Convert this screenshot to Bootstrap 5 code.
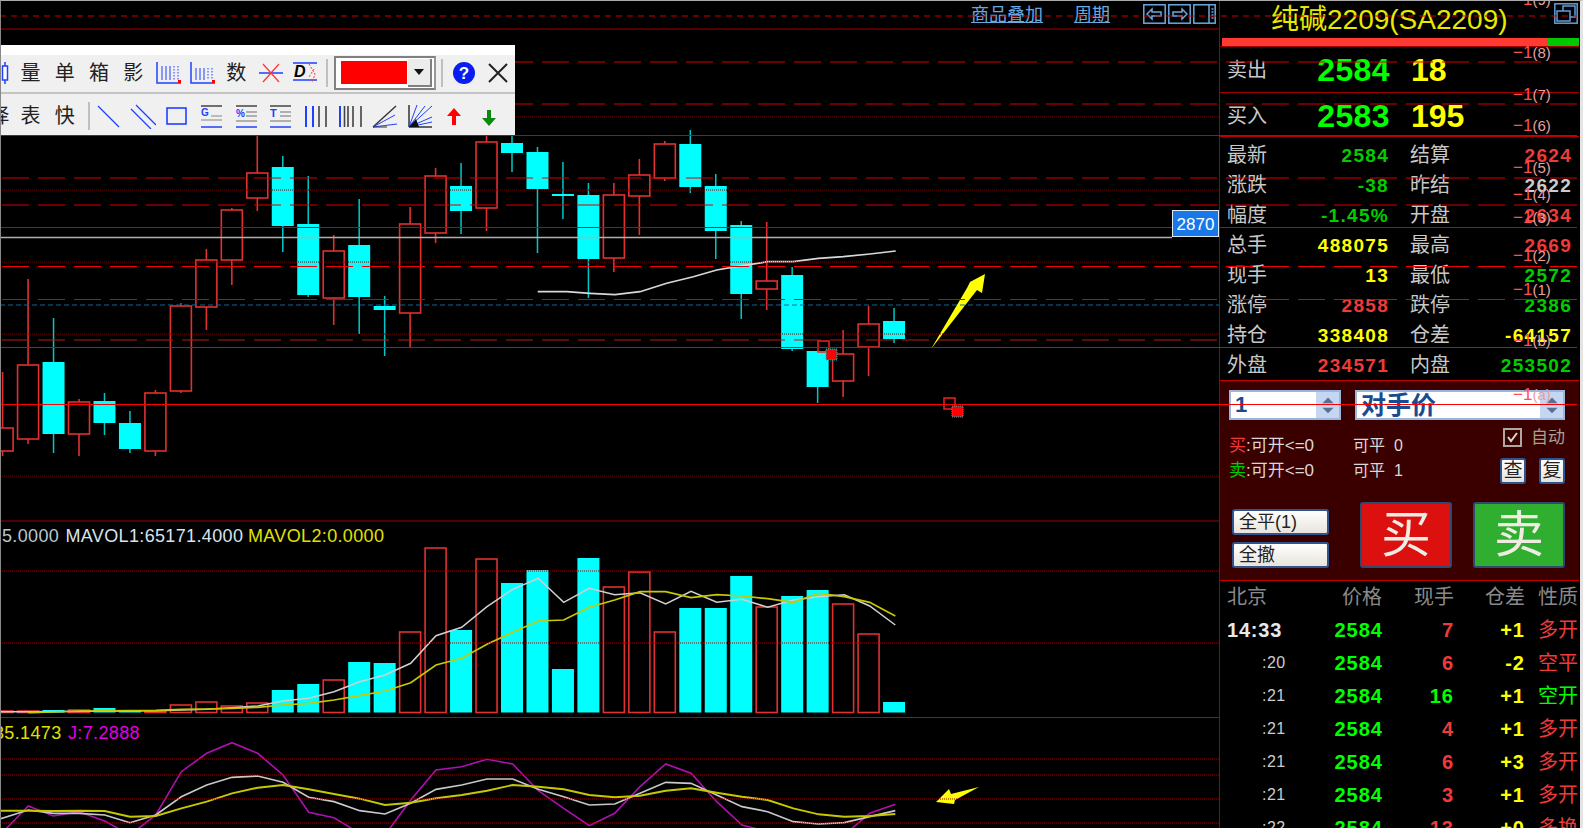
<!DOCTYPE html>
<html lang="zh-CN">
<head>
  <meta charset="UTF-8" />
  <meta name="viewport" content="width=device-width, initial-scale=1" />
  <title>纯碱2209 - 行情交易</title>
  <link href="https://cdn.jsdelivr.net/npm/bootstrap@5.3.3/dist/css/bootstrap.min.css" rel="stylesheet" />
  <style>
    html, body {
      background: #000;
      height: 828px;
      overflow: hidden;
    }

    body, svg text {
      font-family: "Liberation Sans", "Noto Sans CJK SC", sans-serif;
    }

    .term-wrap {
      position: relative;
      width: 1583px;
      height: 828px;
      overflow: hidden;
      border-top: 1px solid #aaa;
      border-left: 1px solid #888;
      border-right: 3px solid #e4e4e4;
    }

    /* left side */
    .chart-col { width: 1218px; flex: none; }
    .chart-top {
      height: 28px;
      padding-right: 3px;
      color: #6aa8e0;
      font-size: 18px;
      line-height: 28px;
    }
    .chart-top a { color: #6aa8e0; text-decoration: underline; }
    .chart-svg { display: block; }
    .period-link { margin-left: 31px; margin-right: 33px; }
    .top-btn { display: block; width: 23px; height: 20px; margin-top: 3px; margin-right: 2px; }
    .top-btn:last-child { margin-right: 0; }

    /* floating toolbar */
    .tool-float {
      position: absolute;
      left: 0;
      top: 44px;
      width: 514px;
      height: 90px;
      z-index: 3;
      background: #f0f0f0;
      border-top: 10px solid #fff;
      overflow: hidden;
      color: #222;
      font-size: 20px;
      line-height: 1;
    }
    .tool-row1 { height: 39px; border-bottom: 2px solid #c4c4c4; padding-bottom: 2px; }
    .tool-row2 { height: 40px; padding-top: 3px; }
    .tool-cell { width: 34.3px; flex: none; display: flex; align-items: center; justify-content: center; }
    .tool-row2 .draw-cell { width: 34.6px; }
    .tool-edge { width: 12.3px; flex: none; display: flex; align-items: center; justify-content: flex-end; overflow: hidden; }
    .tool-edge span { flex: none; margin-right: 4px; }
    .tool-sep { width: 2px; height: 28px; flex: none; background: #c0c0c0; }
    .sep-draw { margin: 0 1px 0 6px; }
    .tool-ico { width: 26px; height: 26px; display: block; }
    .color-pick {
      width: 102px;
      height: 34px;
      flex: none;
      margin: 0 5px 0 6px;
      display: flex;
      align-items: center;
      padding: 0 2px 0 5px;
      border: 2px solid #808080;
      border-right-color: #999;
      background: #fff;
    }
    .color-swatch { width: 66px; height: 23px; background: #f00; flex: none; }
    .color-drop {
      width: 24px;
      height: 28px;
      margin-left: auto;
      background: #ececec;
      border-right: 2px solid #808080;
      border-bottom: 2px solid #808080;
      display: flex;
      align-items: center;
      justify-content: center;
    }
    .color-drop i {
      border-left: 5px solid transparent;
      border-right: 5px solid transparent;
      border-top: 6px solid #111;
    }

    /* right side */
    .side-col {
      width: 360px;
      flex: none;
      border-left: 1px solid #a00000;
      color: #c8c8c8;
      font-size: 20px;
      line-height: 1;
    }
    .side-title { height: 37px; padding-left: 51px; }
    .title-text {
      color: #e8e800;
      font-size: 28px;
      line-height: 37px;
      white-space: nowrap;
    }
    .corner-btn { display: block; width: 24px; height: 21px; margin: 2px 1px 0 auto; }
    .side-bar { height: 8px; display: flex; }
    .bar-up { width: 326px; background: #ff3a30; margin-left: 2px; }
    .bar-down { flex: 1; background: #00c800; }
    .big-row {
      height: 46px;
      padding-left: 7px;
      border-top: 1px solid #a00000;
    }
    .big-row.buy-row { height: 44px; padding-top: 2px; }
    .big-price {
      width: 123px;
      text-align: right;
      color: #0f0;
      font-size: 32px;
      font-weight: 700;
      letter-spacing: .4px;
    }
    .big-size {
      margin-left: 21px;
      color: #ff0;
      font-size: 32px;
      font-weight: 700;
    }
    .quote-box { border-top: 1px solid #c00000; padding-top: 3px; }
    .quote-line { height: 30px; padding-left: 7px; }
    .q-label { width: 40px; flex: none; }
    .q-val {
      flex: none;
      width: 122px;
      text-align: right;
      font-size: 19px;
      font-weight: 700;
      letter-spacing: 1.3px;
    }
    .q-label2 { margin-left: 21px; }
    .c-red { color: #f03a3a; }
    .c-green { color: #0c0; }
    .c-grn { color: #0f0; }
    .c-yel { color: #ff0; }
    .c-gray { color: #ccc; }

    /* trade box */
    .trade-box {
      height: 201px;
      background: #3a0000;
      border-top: 1px solid #c00000;
      border-bottom: 1px solid #c00000;
      padding: 9px 14px 0 9px;
      color: #d8d8d8;
    }
    .spin-wrap {
      height: 30px;
      background: #fff;
      border: 2px solid #9db4dc;
      color: #1a4a90;
      font-weight: 700;
      overflow: hidden;
    }
    .spin-qty { width: 112px; font-size: 22px; padding-left: 4px; }
    .spin-type { width: 210px; margin-left: 14px; font-size: 25px; padding-left: 4px; }
    .spin-btn {
      width: 25px;
      height: 100%;
      margin-left: auto;
      flex: none;
      background: #c4d6f2;
      margin-right: -2px;
      display: block;
    }
    .spin-text { line-height: 26px; white-space: nowrap; }
    .trade-info { margin-top: 7px; font-size: 17px; height: 72px; }
    .info-col1 { width: 124px; flex: none; padding-top: 6px; }
    .info-col2 { width: 120px; flex: none; padding-top: 6px; font-size: 16px; }
    .info-line { height: 25px; line-height: 25px; white-space: nowrap; }
    .info-col3 { flex: 1; text-align: right; }
    .auto-check {
      color: #a8a090;
      font-size: 17px;
      height: 20px;
      gap: 9px;
      justify-content: flex-end;
    }
    .check-box {
      width: 19px;
      height: 19px;
      border: 2px solid #b0a8a0;
      display: block;
    }
    .mini-row { gap: 13px; justify-content: flex-end; margin-top: 11px; }
    .mini-btn {
      width: 26px;
      height: 26px;
      background: linear-gradient(#fff, #e6e2da);
      border: 2px solid #2e5590;
      border-radius: 3px;
      color: #222;
      font-size: 19px;
      line-height: 22px;
      text-align: center;
      padding: 0;
    }
    .trade-btns { margin-top: 3px; }
    .flat-col { width: 97px; margin-left: 3px; flex: none; padding-top: 7px; }
    .flat-btn {
      display: block;
      width: 97px;
      height: 26px;
      background: linear-gradient(#fff, #e8e4dc);
      border: 2px solid #2e5590;
      border-radius: 3px;
      padding: 0 0 0 5px;
      color: #222;
      font-size: 18px;
      line-height: 22px;
      text-align: left;
      margin-bottom: 7px;
    }
    .deal-btn {
      width: 92px;
      height: 66px;
      flex: none;
      border: 2px solid #2e4a70;
      border-radius: 3px;
      color: #f0ece4;
      font-size: 50px;
      line-height: 60px;
      text-align: center;
      padding: 0;
    }
    .deal-buy { background: #dd1010; margin-left: 31px; }
    .deal-sell { background: #2fae2f; margin-left: 21px; }

    /* tick list */
    .tick-line { height: 33px; padding-left: 7px; white-space: nowrap; }
    .t-time { width: 60px; flex: none; padding-left: 35px; font-size: 16px; letter-spacing: .5px; color: #ccc; }
    .t-time.hour { padding-left: 0; color: #e8e8e8; font-size: 20px; font-weight: 700; letter-spacing: .8px; }
    .t-price { width: 96px; flex: none; text-align: right; color: #0f0; font-size: 20px; font-weight: 700; letter-spacing: 1px; }
    .t-size { width: 71px; flex: none; text-align: right; font-size: 20px; font-weight: 700; letter-spacing: 1px; }
    .t-diff { width: 71px; flex: none; text-align: right; color: #ff0; font-size: 20px; font-weight: 700; letter-spacing: 1px; }
    .t-kind { width: 54px; flex: none; padding-left: 13px; font-size: 20px; }
    .tick-head { color: #8a8a8a; height: 32px; }
    .tick-head .t-time, .tick-head .t-price, .tick-head .t-size, .tick-head .t-diff {
      padding-left: 0;
      color: #8a8a8a;
      font-size: 20px;
      font-weight: 400;
      letter-spacing: 0;
    }
    .tick-head .t-price { padding-right: 1px; }

    .line-layer {
      position: absolute;
      left: -1px;
      top: -1px;
      z-index: 2;
      pointer-events: none;
    }
  </style>
</head>
<body>

<div class="term-wrap d-flex">

  <!-- chart side -->
  <div class="chart-col">
    <div class="chart-top d-flex justify-content-end">
      <a href="#">商品叠加</a>
      <a href="#" class="period-link">周期</a>
      <svg class="top-btn" viewBox="0 0 23 20" fill="none" stroke="#6aa8e0" stroke-width="1.5"><rect x=".8" y=".8" width="21.4" height="18.4"/><path d="M4 10l5-5v3h9v4H9v3z"/></svg>
      <svg class="top-btn" viewBox="0 0 23 20" fill="none" stroke="#6aa8e0" stroke-width="1.5"><rect x=".8" y=".8" width="21.4" height="18.4"/><path d="M19 10l-5-5v3H5v4h9v3z"/></svg>
      <svg class="top-btn" viewBox="0 0 23 20" fill="none" stroke="#6aa8e0" stroke-width="1.5"><rect x=".8" y=".8" width="21.4" height="18.4"/><path d="M16 1v18M18.5 5h2M18.5 8h2M18.5 11h2M18.5 14h2"/></svg>
    </div>
    <svg id="chart" class="chart-svg" width="1218" height="799" viewBox="1 29 1218 799">
      <text x="2" y="542" font-size="18" letter-spacing=".35" fill="#b8c8d0">5.0000</text>
      <text x="65.500" y="542" font-size="18" letter-spacing=".35" fill="#d8e4ec">MAVOL1:65171.4000</text>
      <text x="248" y="542" font-size="18" letter-spacing=".35" fill="#e0e000">MAVOL2:0.0000</text>
      <text x="-6" y="739" font-size="18" letter-spacing=".35" fill="#e0e000">35.1473</text>
      <text x="68" y="739" font-size="18" letter-spacing=".35" fill="#e000e0">J:7.2888</text>
    </svg>
  </div>

  <!-- quote + trade side -->
  <div class="side-col">
    <div class="side-title d-flex">
      <span class="title-text">纯碱2209(SA2209)</span>
      <svg class="corner-btn" viewBox="0 0 24 21" fill="none" stroke="#5f9fd8" stroke-width="1.5"><rect x=".8" y=".8" width="22.4" height="19.4"/><path d="M3 8h13v10H3zM9 8V3h12v11h-5"/></svg>
    </div>
    <div class="side-bar"><div class="bar-up"></div><div class="bar-down"></div></div>

    <div class="big-row d-flex align-items-center"><span class="q-label">卖出</span><span class="big-price">2584</span><span class="big-size">18</span></div>
    <div class="big-row buy-row d-flex align-items-center"><span class="q-label">买入</span><span class="big-price">2583</span><span class="big-size">195</span></div>

    <div class="quote-box">
      <div class="quote-line d-flex align-items-center"><span class="q-label">最新</span><span class="q-val c-green">2584</span><span class="q-label q-label2">结算</span><span class="q-val c-red">2624</span></div>
      <div class="quote-line d-flex align-items-center"><span class="q-label">涨跌</span><span class="q-val c-green">-38</span><span class="q-label q-label2">昨结</span><span class="q-val c-gray">2622</span></div>
      <div class="quote-line d-flex align-items-center"><span class="q-label">幅度</span><span class="q-val c-green">-1.45%</span><span class="q-label q-label2">开盘</span><span class="q-val c-red">2634</span></div>
      <div class="quote-line d-flex align-items-center"><span class="q-label">总手</span><span class="q-val c-yel">488075</span><span class="q-label q-label2">最高</span><span class="q-val c-red">2669</span></div>
      <div class="quote-line d-flex align-items-center"><span class="q-label">现手</span><span class="q-val c-yel">13</span><span class="q-label q-label2">最低</span><span class="q-val c-green">2572</span></div>
      <div class="quote-line d-flex align-items-center"><span class="q-label">涨停</span><span class="q-val c-red">2858</span><span class="q-label q-label2">跌停</span><span class="q-val c-green">2386</span></div>
      <div class="quote-line d-flex align-items-center"><span class="q-label">持仓</span><span class="q-val c-yel">338408</span><span class="q-label q-label2">仓差</span><span class="q-val c-yel">-64157</span></div>
      <div class="quote-line d-flex align-items-center"><span class="q-label">外盘</span><span class="q-val c-red">234571</span><span class="q-label q-label2">内盘</span><span class="q-val c-green">253502</span></div>
    </div>

    <div class="trade-box">
      <div class="d-flex">
        <div class="spin-wrap spin-qty d-flex"><span class="spin-text">1</span>
          <svg class="spin-btn" viewBox="0 0 25 28"><path d="M6 12l6-6 6 6z M6 17l6 6 6-6z" fill="#5a7090"/></svg></div>
        <div class="spin-wrap spin-type d-flex"><span class="spin-text">对手价</span>
          <svg class="spin-btn" viewBox="0 0 25 28"><path d="M6 12l6-6 6 6z M6 17l6 6 6-6z" fill="#5a7090"/></svg></div>
      </div>
      <div class="trade-info d-flex">
        <div class="info-col1">
          <div class="info-line"><span class="c-red">买</span>:可开&lt;=0</div>
          <div class="info-line"><span class="c-green">卖</span>:可开&lt;=0</div>
        </div>
        <div class="info-col2">
          <div class="info-line">可平&nbsp;&nbsp;0</div>
          <div class="info-line">可平&nbsp;&nbsp;1</div>
        </div>
        <div class="info-col3">
          <div class="auto-check d-flex align-items-center">
            <svg class="check-box" viewBox="0 0 15 15" fill="none" stroke="#d8d4cc" stroke-width="2"><path d="M3 7l3 4 6-8"/></svg>
            <span>自动</span>
          </div>
          <div class="mini-row d-flex">
            <button class="mini-btn" type="button">查</button>
            <button class="mini-btn" type="button">复</button>
          </div>
        </div>
      </div>
      <div class="trade-btns d-flex">
        <div class="flat-col">
          <button class="flat-btn" type="button">全平(1)</button>
          <button class="flat-btn" type="button">全撤</button>
        </div>
        <button class="deal-btn deal-buy" type="button">买</button>
        <button class="deal-btn deal-sell" type="button">卖</button>
      </div>
    </div>

    <div class="tick-list">
      <div class="tick-line tick-head d-flex align-items-center"><span class="t-time">北京</span><span class="t-price">价格</span><span class="t-size">现手</span><span class="t-diff">仓差</span><span class="t-kind">性质</span></div>
      <div class="tick-line d-flex align-items-center"><span class="t-time hour">14:33</span><span class="t-price">2584</span><span class="t-size c-red">7</span><span class="t-diff">+1</span><span class="t-kind c-red">多开</span></div>
      <div class="tick-line d-flex align-items-center"><span class="t-time">:20</span><span class="t-price">2584</span><span class="t-size c-red">6</span><span class="t-diff">-2</span><span class="t-kind c-red">空平</span></div>
      <div class="tick-line d-flex align-items-center"><span class="t-time">:21</span><span class="t-price">2584</span><span class="t-size c-grn">16</span><span class="t-diff">+1</span><span class="t-kind c-grn">空开</span></div>
      <div class="tick-line d-flex align-items-center"><span class="t-time">:21</span><span class="t-price">2584</span><span class="t-size c-red">4</span><span class="t-diff">+1</span><span class="t-kind c-red">多开</span></div>
      <div class="tick-line d-flex align-items-center"><span class="t-time">:21</span><span class="t-price">2584</span><span class="t-size c-red">6</span><span class="t-diff">+3</span><span class="t-kind c-red">多开</span></div>
      <div class="tick-line d-flex align-items-center"><span class="t-time">:21</span><span class="t-price">2584</span><span class="t-size c-red">3</span><span class="t-diff">+1</span><span class="t-kind c-red">多开</span></div>
      <div class="tick-line d-flex align-items-center"><span class="t-time">:22</span><span class="t-price">2584</span><span class="t-size c-red">13</span><span class="t-diff">+0</span><span class="t-kind c-red">多换</span></div>
    </div>
  </div>

  <!-- floating drawing toolbar -->
  <div class="tool-float">
    <div class="tool-row1 d-flex align-items-center">
      <div class="tool-edge"><svg width="12" height="26" viewBox="0 0 12 26" class="flex-none"><path d="M4 2v22" stroke="#2040ff" stroke-width="1.5"/><rect x="1.500" y="6" width="5" height="14" fill="#fff" stroke="#2040ff" stroke-width="1.5"/></svg></div>
      <div class="tool-cell">量</div>
      <div class="tool-cell">单</div>
      <div class="tool-cell">箱</div>
      <div class="tool-cell">影</div>
      <div class="tool-cell"><svg class="tool-ico" viewBox="0 0 26 26" fill="none"><path d="M2 2v21h24" stroke="#2040ff" stroke-width="1.5"/><path d="M7 6v14M11 6v14M15 6v14" stroke="#2040ff"/><path d="M19 6v14M23 6v14" stroke="#2040ff" stroke-dasharray="1.5 1.5"/><rect x="23" y="20" width="3" height="3" fill="#f00"/></svg></div>
      <div class="tool-cell"><svg class="tool-ico" viewBox="0 0 26 26" fill="none"><path d="M2 2v21h24" stroke="#2040ff" stroke-width="1.5"/><path d="M7 8v12M11 8v12M15 8v12" stroke="#2040ff"/><path d="M19 8v12M23 8v12" stroke="#2040ff" stroke-dasharray="1.5 1.5"/><rect x="23" y="20" width="3" height="3" fill="#f00"/></svg></div>
      <div class="tool-cell">数</div>
      <div class="tool-cell"><svg class="tool-ico" viewBox="0 0 26 26" fill="none"><path d="M1 13h24" stroke="#2040ff" stroke-width="1.5"/><path d="M5 4l16 18M21 4L5 22" stroke="#f33" stroke-width="1.2"/></svg></div>
      <div class="tool-cell"><svg class="tool-ico" viewBox="0 0 26 26" fill="none"><path d="M1 3h24M1 20h24" stroke="#2040ff" stroke-width="1.5"/><text x="2" y="17" font-size="16" font-weight="700" font-style="italic" fill="#000">D</text><path d="M17 4l6 10-3 9M22 9l-5 8" stroke="#f33" stroke-dasharray="2 1.5"/></svg></div>
      <div class="tool-sep ms-1"></div>
      <div class="color-pick"><div class="color-swatch"></div><div class="color-drop"><i></i></div></div>
      <div class="tool-sep"></div>
      <div class="tool-cell ms-1"><svg class="tool-ico" viewBox="0 0 26 26"><circle cx="13" cy="13" r="11" fill="#0a1cf0"/><text x="13" y="19" text-anchor="middle" font-size="17" font-weight="700" fill="#fff">?</text></svg></div>
      <div class="tool-cell"><svg class="tool-ico" viewBox="0 0 26 26" fill="none"><path d="M4 4l18 18M22 4L4 22" stroke="#222" stroke-width="2"/></svg></div>
    </div>
    <div class="tool-row2 d-flex align-items-center">
      <div class="tool-edge"><span>择</span></div>
      <div class="tool-cell">表</div>
      <div class="tool-cell">快</div>
      <div class="tool-sep sep-draw"></div>
      <div class="tool-cell draw-cell"><svg class="tool-ico" viewBox="0 0 26 26" fill="none"><path d="M3 3l21 21" stroke="#2040ff" stroke-width="1.3"/></svg></div>
      <div class="tool-cell draw-cell"><svg class="tool-ico" viewBox="0 0 26 26" fill="none"><path d="M1 6l20 20M6 2l20 20" stroke="#2040ff" stroke-width="1.3"/></svg></div>
      <div class="tool-cell draw-cell"><svg class="tool-ico" viewBox="0 0 26 26" fill="none"><rect x="3" y="5" width="19" height="16" stroke="#2040ff" stroke-width="1.6"/></svg></div>
      <div class="tool-cell draw-cell"><svg class="tool-ico" viewBox="0 0 26 26" fill="none"><path d="M2 3h21" stroke="#444" stroke-width="1.5"/><path d="M12 13h11M2 17h21" stroke="#aaa" stroke-width="1.5"/><path d="M2 24h21" stroke="#2040ff" stroke-width="1.5"/><text x="2" y="13" font-size="10" font-weight="700" fill="#2040ff">G</text></svg></div>
      <div class="tool-cell draw-cell"><svg class="tool-ico" viewBox="0 0 26 26" fill="none"><path d="M2 3h21" stroke="#444" stroke-width="1.5"/><path d="M12 9h11M12 13h11M2 18h21" stroke="#999" stroke-width="1.5"/><path d="M2 24h21" stroke="#2040ff" stroke-width="1.5"/><text x="2" y="14" font-size="10" font-weight="700" fill="#2040ff">%</text></svg></div>
      <div class="tool-cell draw-cell"><svg class="tool-ico" viewBox="0 0 26 26" fill="none"><path d="M2 3h21" stroke="#444" stroke-width="1.5"/><path d="M12 9h11M12 13h11M2 18h21" stroke="#999" stroke-width="1.5"/><path d="M2 24h21" stroke="#2040ff" stroke-width="1.5"/><text x="2" y="14" font-size="11" font-weight="700" fill="#2040ff">T</text></svg></div>
      <div class="tool-cell draw-cell"><svg class="tool-ico" viewBox="0 0 26 26" fill="none"><path d="M3 3v21M10 3v21" stroke="#2040ff" stroke-width="2"/><path d="M16 3v21M23 3v21" stroke="#444" stroke-width="1.6"/></svg></div>
      <div class="tool-cell draw-cell"><svg class="tool-ico" viewBox="0 0 26 26" fill="none"><path d="M3 3v21" stroke="#2040ff" stroke-width="2"/><path d="M7.500 3v21M11 3v21M16 3v21M24 3v21" stroke="#444" stroke-width="1.6"/></svg></div>
      <div class="tool-cell draw-cell"><svg class="tool-ico" viewBox="0 0 26 26" fill="none"><path d="M1 24L24 3" stroke="#333" stroke-width="1.4"/><path d="M1 24L23 12M1 24l24-3" stroke="#2040ff"/><path d="M1 24h14" stroke="#333"/></svg></div>
      <div class="tool-cell draw-cell"><svg class="tool-ico" viewBox="0 0 26 26" fill="none"><path d="M2 24V2M2 24h23" stroke="#333" stroke-width="1.5"/><path d="M2 24L10 2M2 24L25 3" stroke="#2040ff"/><path d="M2 24L18 3M2 24l23-10M2 24l23-5" stroke="#2040ff"/><path d="M2 24L9 16 12 24z" fill="#111"/></svg></div>
      <div class="tool-cell draw-cell"><svg class="tool-ico" viewBox="0 0 26 26"><path d="M13 5l7 8h-5v9h-4v-9H6z" fill="#f00"/></svg></div>
      <div class="tool-cell draw-cell"><svg class="tool-ico" viewBox="0 0 26 26"><path d="M13 23l7-8h-5V7h-4v8H6z" fill="#0a8a0a"/></svg></div>
    </div>
  </div>

  <!-- guide lines drawn across the whole window -->
  <svg id="lines" class="line-layer" width="1583" height="828" viewBox="0 0 1583 828"></svg>
</div>

<script src="https://cdn.jsdelivr.net/npm/bootstrap@5.3.3/dist/js/bootstrap.bundle.min.js"></script>
<script>
  const RED = "#e03030";
  const CYAN = "#00ffff";

  // type, high, top, bottom, low (c = cyan, r = red)
  const candles = [
    ["r",372,428,451,456],["r",279,365,439,444],["c",318,362,434,453],["r",399,402,434,456],
    ["c",393,401,423,435],["c",411,423,449,453],["r",390,393,451,456],["r",303,306,391,393],
    ["r",249,260,307,330],["r",208,210,260,285],["r",133,173,198,211],["c",156,167,226,252],
    ["c",176,224,295,297],["r",235,251,298,325],["c",199,245,297,334],["c",296,306,310,356],
    ["r",207,224,313,347],["r",168,176,233,243],["c",163,186,211,234],["r",133,142,208,231],
    ["c",133,143,153,172],["c",147,152,189,253],["c",162,194,196,219],["c",183,195,259,298],
    ["r",183,195,258,272],["r",159,175,196,235],["r",141,144,178,181],["c",130,144,187,193],
    ["c",174,186,231,259],["c",221,225,294,319],["r",222,281,289,310],["c",267,275,349,351],
    ["c",351,351,387,403],["r",330,354,381,397],["r",306,324,347,376],["c",308,321,339,343]
  ];
  // volume bar tops, same order
  const volTops = [711,711,710,710,708,711,711,705,702,706,703,690,684,680,662,663,632,548,630,559,
                   583,570,669,558,587,572,632,608,608,576,607,596,590,604,634,702];
  const xOf = i => 2.6 + 25.47 * i;

  // points read off the zoomed crops
  const z6 = a => a.map(p => [p[0] / 3, 520 + p[1] / 3]);
  const z7 = a => a.map(p => [480 + p[0] / 3, 520 + p[1] / 3]);
  const z5 = a => a.map(p => [490 + p[0] / 3, 120 + p[1] / 3]);

  const maLine = z5([[143,515],[230,515],[300,520],[375,524],[450,515],[530,490],[610,470],[680,450],[757,437],[833,425],[910,425],[985,415],[1060,410],[1140,402],[1217,393]]);

  const volWhite = z6([[0,575],[85,575],[467,572],[544,570],[620,568],[696,563],[773,558],[849,543],[926,535],[1002,515],[1079,485],[1155,465],[1232,430],[1308,347],[1385,322],[1461,260]])
    .concat(z7([[98,208],[175,175],[251,247],[328,205],[404,224],[480,218],[557,252],[633,214],[710,247],[786,238],[863,262],[940,240],[1016,230],[1093,224],[1169,258],[1246,315]]));
  const volYellow = z6([[85,578],[160,576],[240,573],[467,571],[544,568],[620,567],[696,565],[773,562],[849,555],[926,550],[1002,540],[1079,527],[1155,513],[1232,488],[1308,435],[1385,415],[1461,373]])
    .concat(z7([[98,337],[175,303],[251,300],[328,262],[404,240],[480,215],[557,215],[633,233],[710,224],[786,228],[863,236],[940,247],[1016,220],[1093,230],[1169,247],[1246,288]]));

  const kLine = z6([[0,872],[85,872],[160,873],[237,872],[314,873],[390,890],[467,888],[544,865],[620,845],[696,820],[773,803],[849,795],[926,808],[1002,822],[1079,836],[1155,855],[1232,848],[1308,835],[1385,825],[1461,812]])
    .concat(z7([[98,795],[175,800],[251,808],[328,825],[404,832],[480,827],[557,812],[633,805],[710,818],[786,830],[863,840],[940,865],[1016,883],[1093,890],[1169,888],[1246,882]]));
  const dLine = z6([[0,897],[85,870],[160,880],[237,880],[314,885],[390,908],[467,885],[544,830],[620,795],[696,772],[773,768],[849,787],[926,832],[1002,845],[1079,872],[1155,882],[1232,850],[1308,808],[1385,795],[1461,777]])
    .concat(z7([[98,777],[175,808],[251,830],[328,855],[404,852],[480,820],[557,787],[633,790],[710,825],[786,860],[863,875],[940,905],[1016,912],[1093,908],[1169,890],[1246,872]]));
  const jLine = z6([[0,945],[85,858],[160,888],[237,875],[314,903],[390,945],[467,885],[544,755],[620,700],[696,668],[773,700],[849,765],[926,877],[1002,893],[1079,940],[1155,945],[1232,840],[1308,750],[1385,740],[1461,718]])
    .concat(z7([[98,732],[175,812],[251,865],[328,917],[404,880],[480,800],[557,732],[633,760],[710,845],[786,915],[863,935],[940,945],[1093,945],[1169,880],[1246,853]]));

  const poly = (pts, color, w) =>
    `<polyline points="${pts.map(p => p[0].toFixed(1) + "," + p[1].toFixed(1)).join(" ")}" fill="none" stroke="${color}" stroke-width="${w}"/>`;

  let out = "";
  candles.forEach((c, i) => {
    const x = xOf(i);
    if (c[0] === "c") {
      out += `<path d="M${x} ${c[1]}V${c[4]}" stroke="#00c8c8" stroke-width="1.5"/>`;
      out += `<rect x="${x - 11}" y="${c[2]}" width="22" height="${c[3] - c[2]}" fill="${CYAN}"/>`;
    } else {
      out += `<path d="M${x} ${c[1]}V${c[2]}M${x} ${c[3]}V${c[4]}" stroke="${RED}" stroke-width="1.6"/>`;
      out += `<rect x="${x - 10.5}" y="${c[2]}" width="21" height="${c[3] - c[2]}" fill="#000" stroke="${RED}" stroke-width="1.6"/>`;
    }
    const t = volTops[i];
    if (c[0] === "c") {
      out += `<rect x="${x - 11}" y="${t}" width="22" height="${712.5 - t}" fill="${CYAN}"/>`;
    } else {
      out += `<rect x="${x - 10.5}" y="${t}" width="21" height="${712.5 - t}" fill="#000" stroke="${RED}" stroke-width="1.6"/>`;
    }
  });
  out += poly(maLine, "#d8d8d8", 1.7);
  out += poly(volWhite, "#d0d0d0", 1.5);
  out += poly(volYellow, "#c8c800", 1.7);
  out += poly(jLine, "#b010b0", 1.6);
  out += poly(dLine, "#c8c8c8", 1.7);
  out += poly(kLine, "#c8c800", 1.9);

  // little order markers and hand drawn arrows
  [[818, 341], [944, 398]].forEach(m => {
    out += `<rect x="${m[0]}" y="${m[1]}" width="11" height="11" fill="none" stroke="#f02020" stroke-width="1.5"/>`;
    out += `<rect x="${m[0] + 8}" y="${m[1] + 8}" width="11" height="11" fill="#f00" stroke="#00c8c8" stroke-width="1" stroke-dasharray="1 1"/>`;
  });
  out += `<polygon points="931,349 967,288 970,282 985,274 982,293 977,290" fill="#ff0"/>`;
  out += `<polygon points="936,802 949,789 951,794 979,787 955,800 954,804" fill="#ff0"/>`;
  document.getElementById("chart").insertAdjacentHTML("beforeend", out);

  // guide lines: y, x end, colour, dash
  const guides = [
    [16, 1577, "#d00000", "6 5"], [29, 1219, "#a00000", ""], [62, 1577, "#d80000", "27 9"],
    [104, 1577, "#d80000", "27 9"], [117, 1219, "#800000", "1 1"], [135.5, 1577, "#c80000", ""],
    [178, 1577, "#d80000", "27 9"], [190, 1219, "#800000", "1 1"], [205, 1577, "#d80000", "27 9"],
    [227.5, 1577, "#c80000", ""], [237.5, 1172, "#b0b0b0", ""], [262, 1219, "#800000", "1 1"],
    [266.5, 1577, "#f00000", "27 9"], [299.5, 1577, "#d80000", "27 9"], [305, 1219, "#0a6a9a", "5 3"],
    [334, 1219, "#800000", "1 1"], [340, 1219, "#b02010", "27 9"], [347.5, 1577, "#e00000", ""],
    [404.5, 1577, "#ff0000", ""], [476, 1219, "#800000", "1 1"], [521, 1219, "#a00000", ""],
    [571, 1219, "#a00000", "1 1"], [643, 1219, "#a00000", "1 1"], [717.5, 1219, "#a01010", ""],
    [759, 1219, "#a00000", "1 1"], [775, 1219, "#a00000", "1 1"], [799, 1219, "#a00000", "1 1"],
    [823, 1219, "#a00000", "1 1"]
  ];
  let gl = "";
  guides.forEach(g => {
    const start = g[3] === "27 9" ? 2 : 0;
    const w = g[0] === 237.5 ? 1.5 : 1;
    gl += `<path d="M${start} ${g[0]}H${g[1]}" stroke="${g[2]}" stroke-width="${w}" stroke-dasharray="${g[3]}" fill="none"/>`;
  });
  // grid labels at the right of the guides
  [["9",5],["8",58],["7",100],["6",131],["5",173],["4",200],["3",223],["2",261],["1",295],["b",346],["a",400]].forEach(l => {
    gl += `<text x="1513" y="${l[1]}" font-size="17" fill="#ff5050">−1<tspan fill="#e8a0a0" font-size="15">(${l[0]})</tspan></text>`;
  });
  gl += `<rect x="1172.5" y="210.5" width="46" height="26" fill="#1878e8" stroke="#e0e8f0"/>`;
  gl += `<text x="1195.5" y="230" text-anchor="middle" font-size="17" fill="#fff">2870</text>`;
  document.getElementById("lines").innerHTML = gl;
</script>

</body>
</html>
